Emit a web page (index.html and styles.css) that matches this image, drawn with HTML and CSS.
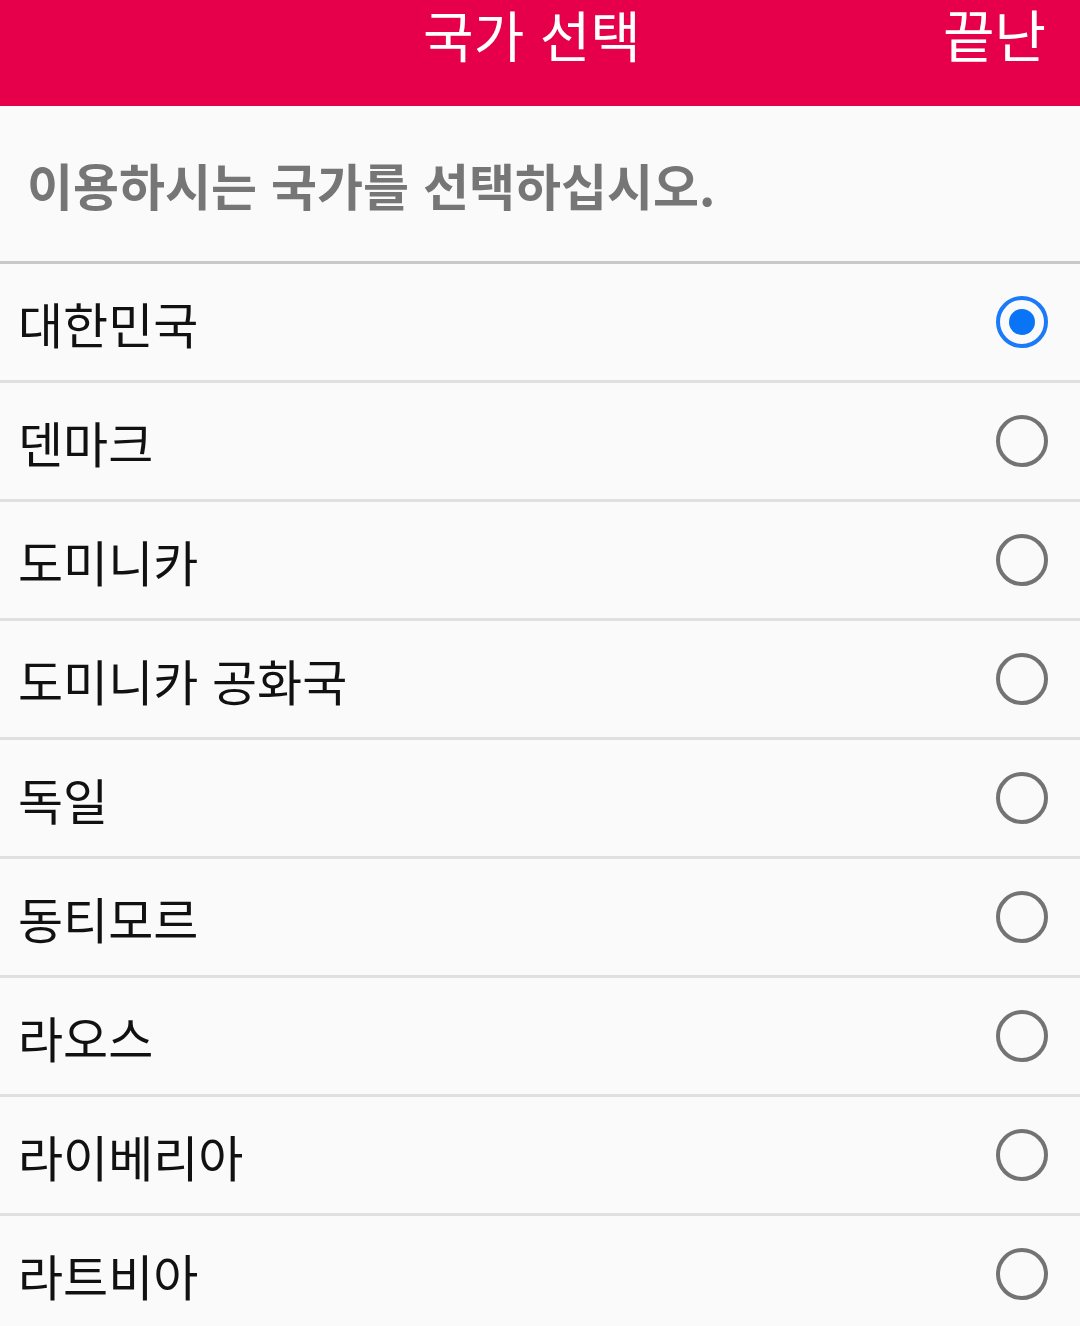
FILE: index.html
```html
<!DOCTYPE html>
<html lang="ko">
<head>
    <meta charset="UTF-8">
    <meta name="viewport" content="width=device-width, initial-scale=1.0">
    <title>국가 선택</title>
    <link rel="stylesheet" href="styles.css">
</head>
<body>
    <div class="header">
        <div class="title">국가 선택</div>
        <div class="done">끝난</div>
    </div>
    <div class="hint">이용하시는 국가를 선택하십시오.</div>
    <ul class="country-list">
        <li class="country"><span>대한민국</span><span class="radio checked"></span></li>
        <li class="country"><span>덴마크</span><span class="radio"></span></li>
        <li class="country"><span>도미니카</span><span class="radio"></span></li>
        <li class="country"><span>도미니카 공화국</span><span class="radio"></span></li>
        <li class="country"><span>독일</span><span class="radio"></span></li>
        <li class="country"><span>동티모르</span><span class="radio"></span></li>
        <li class="country"><span>라오스</span><span class="radio"></span></li>
        <li class="country"><span>라이베리아</span><span class="radio"></span></li>
        <li class="country"><span>라트비아</span><span class="radio"></span></li>
    </ul>
</body>
</html>
```

FILE: styles.css
```css
body {
    margin: 0;
    background: #fafafa;
    font-family: "Noto Sans CJK KR", "Noto Sans", sans-serif;
    overflow: hidden;
}
.header {
    height: 106px;
    background: #e6004c;
    color: #fff;
    display: grid;
    grid-template-columns: 1fr auto 1fr;
    align-items: start;
}
.title {
    grid-column: 2;
    font-size: 55px;
    line-height: 66px;
    margin-right: 16px;
}
.done {
    grid-column: 3;
    justify-self: end;
    font-size: 56px;
    line-height: 66px;
    padding-right: 34px;
}
.hint {
    height: 158px;
    box-sizing: border-box;
    padding-left: 27px;
    display: flex;
    align-items: center;
    font-size: 50px;
    font-weight: bold;
    color: #767676;
    border-bottom: 3px solid #c8c8c8;
}
.country-list {
    list-style: none;
    margin: 0;
    padding: 0;
}
.country {
    height: 116px;
    border-bottom: 3px solid #e0e0e0;
    display: flex;
    align-items: center;
    justify-content: space-between;
    padding: 0 32px 0 18px;
    font-size: 49px;
    color: #111;
}
.radio {
    width: 44px;
    height: 44px;
    border: 4px solid #737373;
    border-radius: 50%;
    position: relative;
}
.radio.checked {
    border-color: #1a7af8;
}
.radio.checked::after {
    content: "";
    position: absolute;
    left: 9px;
    top: 9px;
    width: 26px;
    height: 26px;
    border-radius: 50%;
    background: #0a74f6;
}
```
